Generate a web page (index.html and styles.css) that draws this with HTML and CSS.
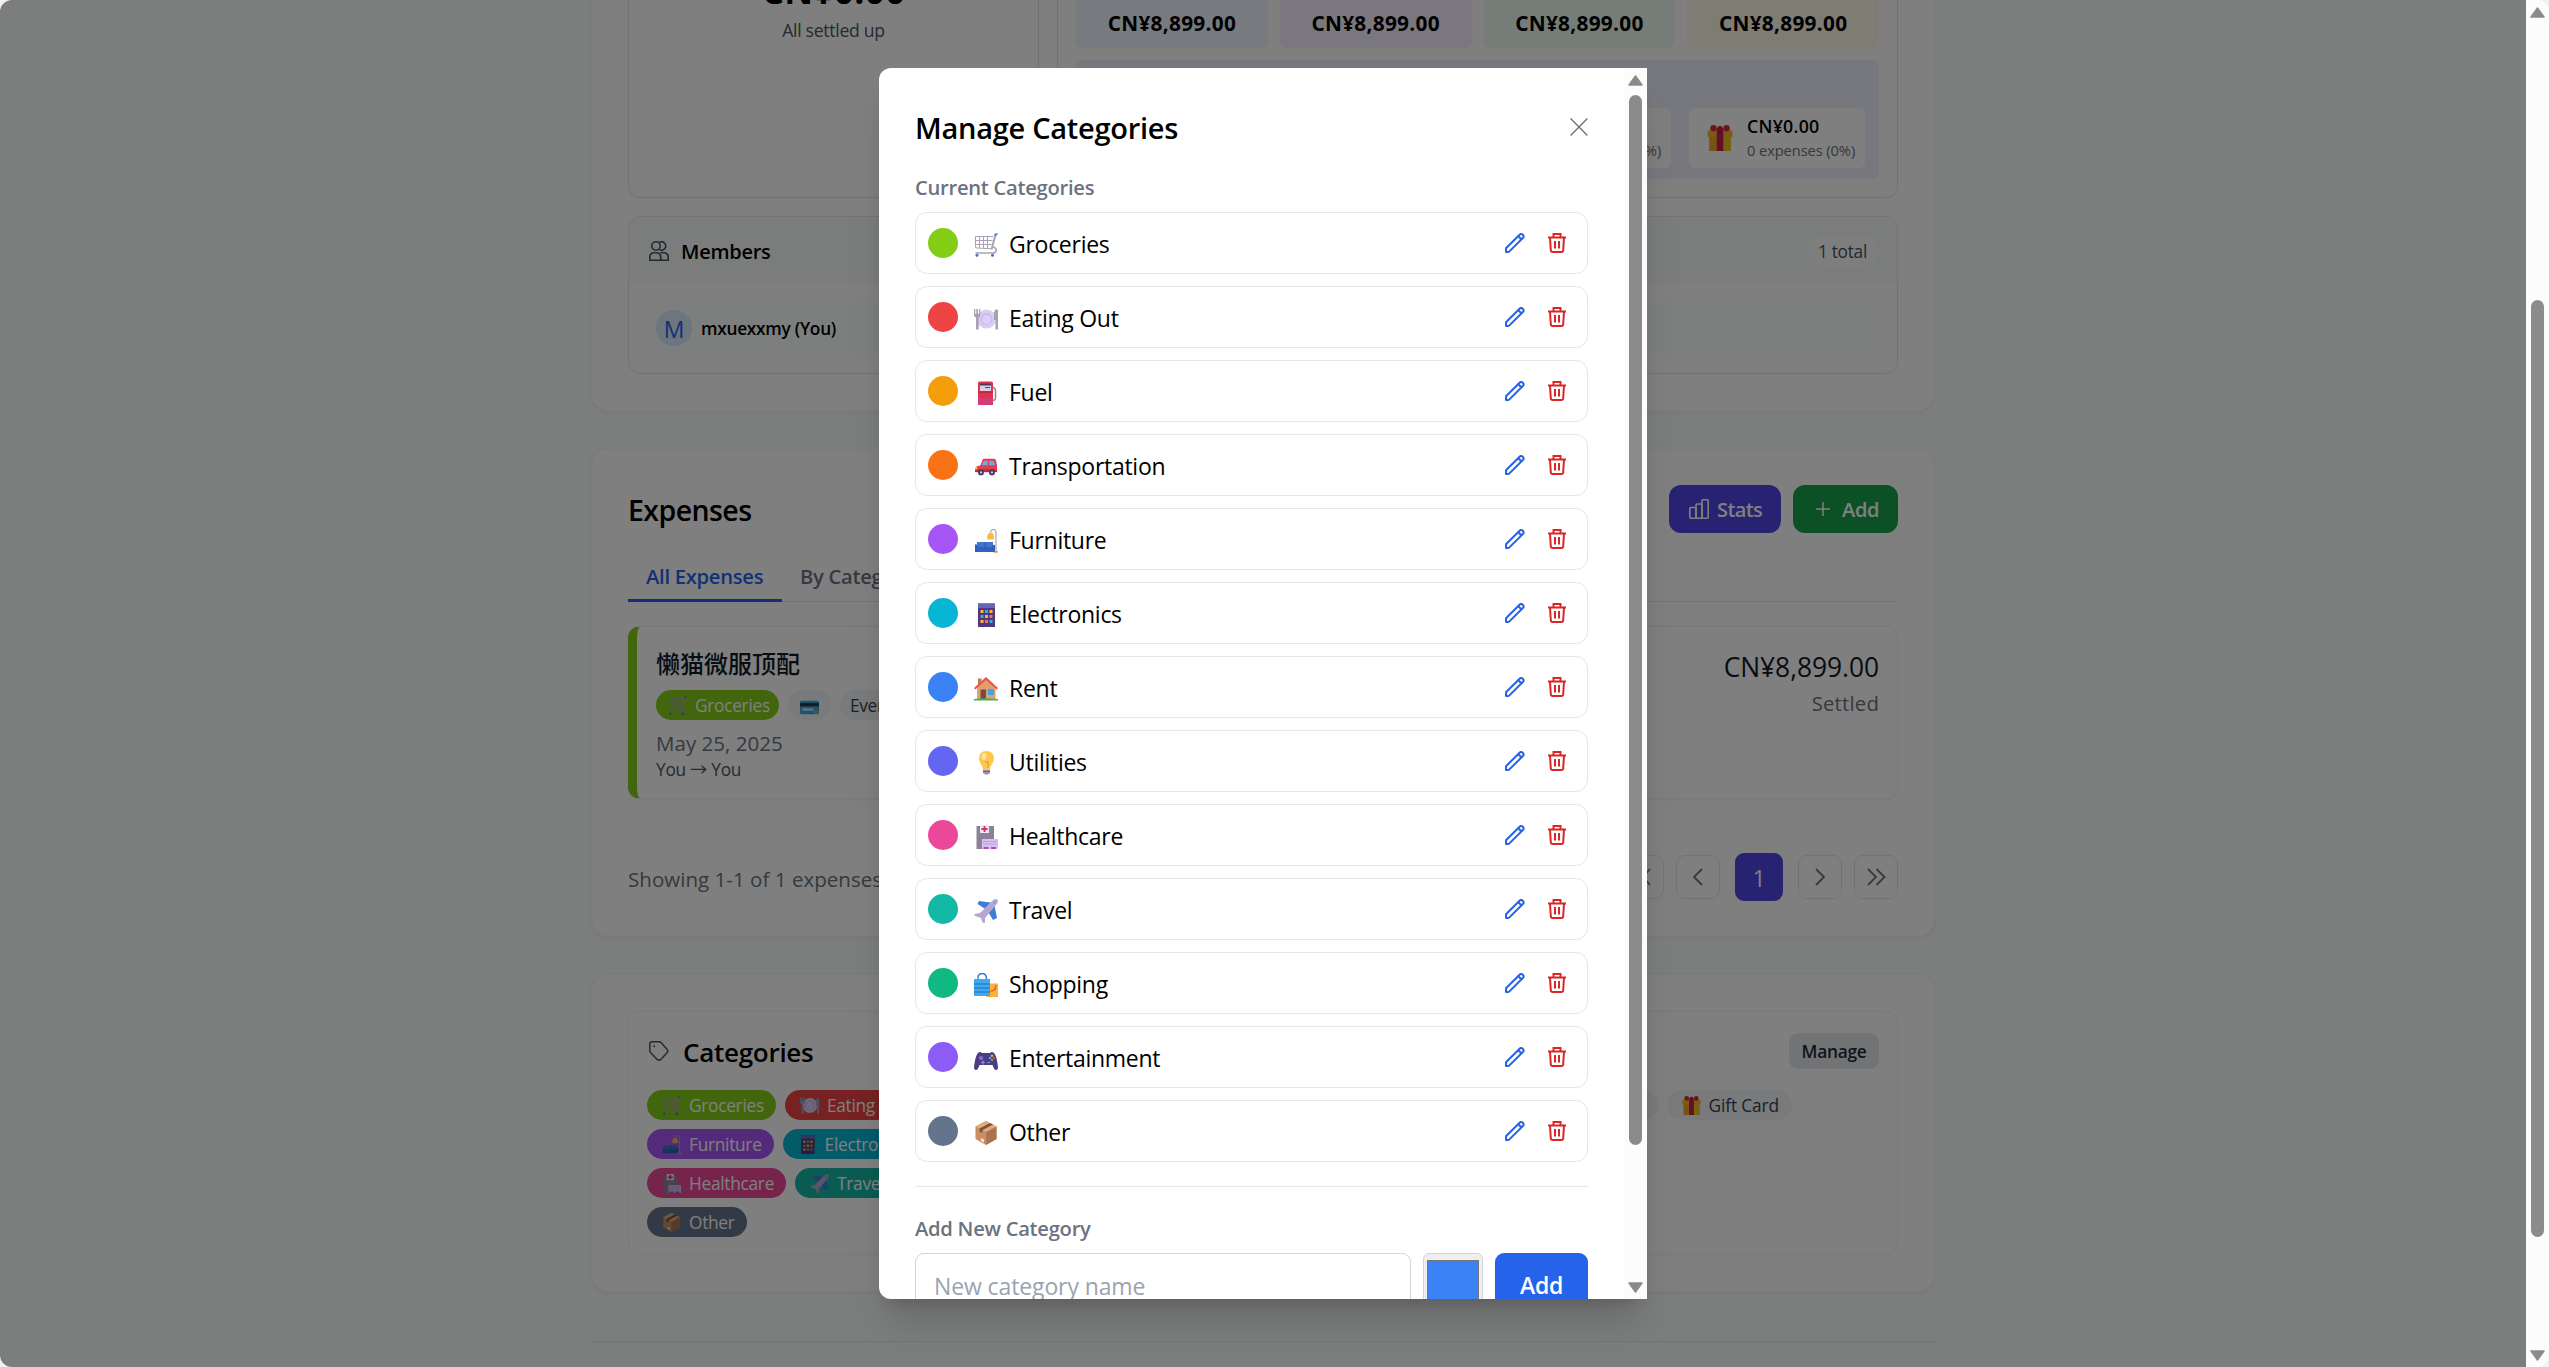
FILE: index.html
```html
<!DOCTYPE html>
<html lang="en">
<head>
<meta charset="utf-8">
<title>Manage Categories</title>
<link rel="stylesheet" href="styles.css">
</head>
<body>
<svg class="defs" aria-hidden="true">
  <symbol id="cart" viewBox="0 0 24 24"><g fill="none" stroke="#a9a3b3"><path d="M1.5 3.5h18M1.5 3.5v10q0 1.5 1.5 1.5l14 .8M5.5 4v11M9.5 4v11M13.500 4v11M1.500 7.500h17M1.500 11.500h16" stroke-width="1.1"/><path d="M21.500 2 17.500 16.500" stroke-width="2"/><path d="M19 14q4 1 3 4-.5 2-3 2H1.500" stroke-width="1.600"/></g><path d="M20.500.8l3-.8v2l-3 .9z" fill="#3f83dd"/><circle cx="3" cy="22.300" r="1.500" fill="#3f74d0"/><circle cx="18.500" cy="22.300" r="1.500" fill="#3f74d0"/></symbol>
  <symbol id="plate" viewBox="0 0 24 24"><circle cx="12.500" cy="12" r="9.500" fill="#d9cdf3"/><circle cx="12.500" cy="12" r="6" fill="#cbbbe9"/><circle cx="12.500" cy="12.500" r="4.500" fill="#dccff6"/><path d="M0 2h1.300v5h1V2h1.700v5h1V2h1.300v6q0 2-1.600 2.500V22.500H2V10.500Q0 10 0 8zM21 3q3-2 3 1v18.500h-2.500V13H20V6z" fill="#aaa0b6"/></symbol>
  <symbol id="fuel" viewBox="0 0 24 24"><path d="M18 6q4 1 3.500 5v6q0 3-3 2" fill="none" stroke="#8c8494" stroke-width="1.500"/><path d="M4 2q0-1.500 1.500-1.500h12Q19 .5 19 2v22H4z" fill="#e2344d"/><path d="M4 17h15v7H4z" fill="#d23b78"/><path d="M6 3h11v7H6z" fill="#d9cde2"/><path d="M6 2.500h11v2H6z" fill="#4a355e"/><path d="M11 6h5v1h-5z" fill="#57476b"/><path d="M4 10.500h15v1.200H4z" fill="#b92243"/></symbol>
  <symbol id="car" viewBox="0 0 24 24"><path d="M1 10.500l5-1.500 2-5.500q.5-1.500 2-1.500h11q1.500 0 2 2l1 5v7H1z" fill="#e63a4d"/><path d="M7.500 9L9.500 4H14v5zM15.500 4H20.500l1.300 5h-6.300z" fill="#55b4ee"/><path d="M0 13.500h24v3H0z" fill="#bd2749"/><path d="M0 11h2.500v2.500H0z" fill="#ffc83d"/><circle cx="6.500" cy="16.800" r="3.200" fill="#45325c"/><circle cx="18.500" cy="16.800" r="3.200" fill="#45325c"/><circle cx="6.500" cy="16.800" r="1.300" fill="#c9bdd6"/><circle cx="18.500" cy="16.800" r="1.300" fill="#c9bdd6"/></symbol>
  <symbol id="sofa" viewBox="0 0 24 24"><path d="M16.500 3q.5-2.500 3-2.500T22 3v19.500" fill="none" stroke="#aaa3ae" stroke-width="1.200"/><path d="M15.500 3.500h2.500q3 3 1.500 7h-6q-1.500-4 2-7z" fill="#f7bb42"/><path d="M20 22h4v1.800h-5z" fill="#eda43b"/><path d="M3 13h16v8H3z" fill="#3d75d1"/><path d="M1 15.500q2.500-1 3 2.500h14q.5-3 3-2v7H1z" fill="#2f62bd"/><path d="M11 13.500v5" stroke="#2a56a5"/></symbol>
  <symbol id="device" viewBox="0 0 24 24"><path d="M4 .5h17V24H4z" fill="#50377f"/><path d="M4 .5h17V5H4z" fill="#6566b8"/><g fill="#ffb13b"><path d="M6.500 7h3v3h-3zM15.500 7h3v3h-3zM11 12h3v3h-3zM6.500 17h3v3h-3z"/></g><g fill="#39a9e6"><path d="M11 7h3v3h-3zM6.500 12h3v3h-3zM15.500 17h3v3h-3z"/></g><g fill="#f8733f"><path d="M15.500 12h3v3h-3zM11 17h3v3h-3z"/></g></symbol>
  <symbol id="house" viewBox="0 0 24 24"><path d="M4 1.500h3.500V8H4z" fill="#b77f62"/><path d="M3 10l9-8 9.500 8v12.500H3z" fill="#dfa26f"/><path d="M12 0l12 11-1.300 1.500L12 3 1.300 12.500 0 11z" fill="#e9553f"/><path d="M6.500 12.500h5.500v10H6.500z" fill="#7b4a42"/><path d="M14 12h6v6h-6z" fill="#40a4ec"/><path d="M0 22q12-1.500 24 0v1.500H0z" fill="#4cae51"/></symbol>
  <symbol id="bulb" viewBox="0 0 24 24"><path d="M12.500 0Q20 0 20 7.500q0 3-2.300 6-1.700 2.500-1.700 4.500H9q0-2-1.800-4.500Q5 10.500 5 7.500 5 0 12.500 0z" fill="#fcc74c"/><ellipse cx="10" cy="5.500" rx="2.500" ry="3.500" fill="#ffe699"/><path d="M11 10l1.500 2 1.500-2v7" fill="none" stroke="#e8963b"/><path d="M9 18.500h7v3.500q-3.500 3.500-7 0z" fill="#a48db5"/><path d="M9 20.500h7" stroke="#76608b"/></symbol>
  <symbol id="hospital" viewBox="0 0 24 24"><path d="M2.500 1H20v23H2.500z" fill="#8c8297"/><path d="M6 0h9v8H6z" fill="#f0e7f6"/><path d="M10.500 1v6M7.500 4h6" stroke="#dc2c5b" stroke-width="1.800"/><path d="M8 14h16v10H8z" fill="#d8c1f0"/><path d="M9 16.500h14M9 19h14" stroke="#bea0e1"/><path d="M9.500 22h5v2h-5zM17 22h5v2h-5z" fill="#b34ab7"/></symbol>
  <symbol id="plane" viewBox="0 0 24 24"><path d="M5 2l15 2 3 15-4 2-6-10L3.500 5z" fill="#3d7fd8"/><path d="M18 2q3-3 5.500-1.500Q25 3 21.500 6.500L11 19v5l-2.500-.5L7 19l-6-2-.8-2L6 14z" fill="#b7a6cf"/><path d="M19.500 2.500l2 2" stroke="#42b5e6" stroke-width="1.500"/></symbol>
  <symbol id="bags" viewBox="0 0 24 24"><path d="M13 10.500h11V24H12z" fill="#ffb03a"/><path d="M21.500 12q1 6-5 6" fill="none" stroke="#db602e" stroke-width="1.300"/><path d="M4 7V5q0-4.500 4-4.500T12.500 5v2" fill="none" stroke="#287dc7" stroke-width="1.400"/><path d="M0 6h16v17H0z" fill="#41a8ee"/><path d="M0 11h16M0 15h16M0 19h16" stroke="#2683d4" stroke-width="1.300"/></symbol>
  <symbol id="gamepad" viewBox="0 0 24 24"><path d="M4 6q2-2 4 0h8q2-2 4 0 2.500 2 4 14 0 3-2 3t-3.500-5H5.500Q4 23 2 23t-2-3Q1.500 8 4 6z" fill="#4f3a83"/><circle cx="7" cy="11" r="2" fill="#7e77c2"/><path d="M9 13.500v4M7 15.500h4M13 15.500h3" stroke="#6fa4e8" stroke-width="1.200"/><circle cx="18" cy="8.800" r="1.200" fill="#f7b433"/><circle cx="20" cy="11" r="1.200" fill="#ef4056"/><circle cx="16" cy="11" r="1.200" fill="#42b5e6"/><circle cx="18" cy="13" r="1.200" fill="#43b581"/></symbol>
  <symbol id="box" viewBox="0 0 24 24"><path d="M12 0l10.500 5.500V18L12 24 1.500 18V5.500z" fill="#c98e61"/><path d="M12 11v13l10.500-6V5.500z" fill="#ad7350"/><path d="M12 0l10.500 5.500L12 11 1.500 5.500z" fill="#dfac7b"/><path d="M5.500 7.600L16 2l3 1.600L8.300 9.200V12l-2.800-1.500z" fill="#7d5142"/><path d="M7 17l3 1.500v3L7 20z" fill="#f3e3da"/></symbol>
  <symbol id="gift" viewBox="0 0 24 24"><path d="M2 6h20v18H2z" fill="#efa526"/><path d="M14 6h8v18h-8z" fill="#e8c51c"/><path d="M.5 5h23v6H.5z" fill="#f7b92c"/><path d="M9 3h6v21H9z" fill="#c81d4f"/><circle cx="6" cy="3" r="3" fill="#dd2939"/><circle cx="18" cy="3" r="3" fill="#dd2939"/><circle cx="12" cy="3.500" r="2.500" fill="#c91f35"/></symbol>
  <symbol id="card" viewBox="0 0 24 24"><rect x="0" y="6" width="24" height="17" rx="2" fill="#3aa7dc"/><path d="M0 9h24v4H0z" fill="#24344b"/><path d="M3 15.500h14v3H3z" fill="#d5e5ef"/><circle cx="20" cy="20" r="1.800" fill="#efb52c"/></symbol>
  <symbol id="pencil" viewBox="0 0 20 20"><g fill="none" stroke="currentColor" stroke-width="2" stroke-linejoin="round"><path d="M1 19v-3.800L14.800 1.500q1.500-1.200 3 .3t.3 3L4.400 18.400q-.6.600-1.500.6z"/><path d="M13.300 3.300l3.200 3.200"/></g></symbol>
  <symbol id="trash" viewBox="0 0 18 20"><g fill="none" stroke="currentColor" stroke-width="2"><path d="M0 4.500h18M5.500 4V1h7v3M2 4.500l.8 12.700q.1 1.800 1.800 1.800h8.800q1.700 0 1.800-1.800l.8-12.700M7 8v7.600M11 8v7.600"/></g></symbol>
</svg>
<div class="window">
  <div class="viewport">
    <main class="container">
      <section class="card group">
        <div class="summary">
          <div class="panel balance"><div class="big">CN¥0.00</div><div class="t18 gray">All settled up</div></div>
          <div class="panel totals">
            <div class="tiles"><div class="tile blue">CN¥8,899.00</div><div class="tile violet">CN¥8,899.00</div><div class="tile green">CN¥8,899.00</div><div class="tile amber">CN¥8,899.00</div></div>
            <div class="methods">
              <div class="method"><svg><use href="#card"/></svg><div><b>CN¥0.00</b><small>0 expenses (0%)</small></div></div>
              <div class="method"><svg><use href="#gift"/></svg><div><b>CN¥0.00</b><small>0 expenses (0%)</small></div></div>
            </div>
          </div>
        </div>
        <div class="panel members">
          <div class="members-head">
            <svg class="i20" viewBox="0 0 20 20"><g fill="none" stroke="currentColor" stroke-width="1.600"><circle cx="7" cy="5" r="4.200"/><path d="M10 1.600a4.200 4.200 0 1 1 0 6.800M.8 19.200v-3q0-4.500 4.500-4.500h2q4.500 0 4.500 4.500v3zM11.500 11.700h3q4.700 0 4.700 4.500v3h-7.500"/></g></svg>
            <h3>Members</h3><span class="total"><b>1</b> total</span>
          </div>
          <div class="member"><span class="avatar">M</span><span class="member-name">mxuexxmy (You)</span></div>
        </div>
      </section>

      <section class="card expenses">
        <div class="head">
          <h2>Expenses</h2>
          <div class="btn stats"><svg class="i20" viewBox="0 0 20 20"><g fill="none" stroke="currentColor" stroke-width="1.600"><rect x=".8" y="8.500" width="6.200" height="10.700" rx="1"/><rect x="7" y="5" width="6" height="14.200" rx="1"/><rect x="13" y=".8" width="6.200" height="18.400" rx="1"/></g></svg>Stats</div>
          <div class="btn add"><svg class="i14" viewBox="0 0 14 14"><path d="M7 0v14M0 7h14" stroke="currentColor" stroke-width="1.500"/></svg>Add</div>
        </div>
        <div class="tabs"><span class="tab active">All Expenses</span><span class="tab">By Category</span></div>
        <div class="expense">
          <div class="expense-main">
            <div class="title">懒猫微服顶配</div>
            <div class="tags"><span class="pill tight c-lime"><svg><use href="#cart"/></svg>Groceries</span><span class="pill tight plain solo"><svg><use href="#card"/></svg></span><span class="pill tight plain">Everyone</span></div>
            <div class="date">May 25, 2025</div>
            <div class="who">You → You</div>
          </div>
          <div class="expense-side"><div class="amount">CN¥8,899.00</div><div class="settled">Settled</div></div>
        </div>
        <div class="pager">
          <span class="showing">Showing 1-1 of 1 expenses</span>
          <span class="page"><svg viewBox="0 0 20 20"><path d="M9 2L2 10l7 8M18 2l-7 8 7 8"/></svg></span>
          <span class="page"><svg viewBox="0 0 20 20"><path d="M14 2L6 10l8 8"/></svg></span>
          <span class="page current">1</span>
          <span class="page"><svg viewBox="0 0 20 20"><path d="M6 2l8 8-8 8"/></svg></span>
          <span class="page"><svg viewBox="0 0 20 20"><path d="M2 2l8 8-8 8M10.500 2l8 8-8 8"/></svg></span>
        </div>
      </section>

      <section class="card cats">
        <div class="panel cats-panel">
          <div class="cats-head">
            <svg class="i20" viewBox="0 0 20 20"><g fill="none" stroke="currentColor" stroke-width="1.500"><path d="M.8 10V3Q.8.800 3 .8h7q1.200 0 2 .8l6 6.600q1.600 1.800 0 3.600L12 18.200q-2 2-4 0l-6-6.200q-1.200-1-1.200-2z"/></g><circle cx="5.200" cy="5.300" r="1" fill="currentColor"/></svg>
            <h3>Categories</h3><span class="manage">Manage</span>
          </div>
          <div class="cats-body">
            <div class="cats-rows">
              <div class="tags"><span class="pill c-lime"><svg><use href="#cart"/></svg>Groceries</span><span class="pill c-red"><svg><use href="#plate"/></svg>Eating Out</span></div>
              <div class="tags"><span class="pill c-purple"><svg><use href="#sofa"/></svg>Furniture</span><span class="pill c-cyan"><svg><use href="#device"/></svg>Electronics</span></div>
              <div class="tags"><span class="pill c-pink"><svg><use href="#hospital"/></svg>Healthcare</span><span class="pill c-teal"><svg><use href="#plane"/></svg>Travel</span></div>
              <div class="tags"><span class="pill c-slate"><svg><use href="#box"/></svg>Other</span></div>
            </div>
            <div class="tags methods-tags"><span class="pill plain"><svg><use href="#card"/></svg>Bank Card</span><span class="pill plain"><svg><use href="#gift"/></svg>Gift Card</span></div>
          </div>
        </div>
      </section>
      <footer class="footer"></footer>
    </main>

    <div class="overlay">
      <div class="modal">
        <div class="modal-body">
          <div class="modal-head"><h2>Manage Categories</h2><svg class="close" viewBox="0 0 18 18"><path d="M.6.6l16.800 16.800M17.400.600L.6 17.400" stroke="currentColor" stroke-width="1.400"/></svg></div>
          <h4>Current Categories</h4>
          <div class="list">
            <div class="row"><i class="dot c-lime"></i><svg class="emoji"><use href="#cart"/></svg><span>Groceries</span><svg class="edit"><use href="#pencil"/></svg><svg class="del"><use href="#trash"/></svg></div>
            <div class="row"><i class="dot c-red"></i><svg class="emoji"><use href="#plate"/></svg><span>Eating Out</span><svg class="edit"><use href="#pencil"/></svg><svg class="del"><use href="#trash"/></svg></div>
            <div class="row"><i class="dot c-amber"></i><svg class="emoji"><use href="#fuel"/></svg><span>Fuel</span><svg class="edit"><use href="#pencil"/></svg><svg class="del"><use href="#trash"/></svg></div>
            <div class="row"><i class="dot c-orange"></i><svg class="emoji car"><use href="#car"/></svg><span>Transportation</span><svg class="edit"><use href="#pencil"/></svg><svg class="del"><use href="#trash"/></svg></div>
            <div class="row"><i class="dot c-purple"></i><svg class="emoji"><use href="#sofa"/></svg><span>Furniture</span><svg class="edit"><use href="#pencil"/></svg><svg class="del"><use href="#trash"/></svg></div>
            <div class="row"><i class="dot c-cyan"></i><svg class="emoji"><use href="#device"/></svg><span>Electronics</span><svg class="edit"><use href="#pencil"/></svg><svg class="del"><use href="#trash"/></svg></div>
            <div class="row"><i class="dot c-blue"></i><svg class="emoji"><use href="#house"/></svg><span>Rent</span><svg class="edit"><use href="#pencil"/></svg><svg class="del"><use href="#trash"/></svg></div>
            <div class="row"><i class="dot c-indigo"></i><svg class="emoji"><use href="#bulb"/></svg><span>Utilities</span><svg class="edit"><use href="#pencil"/></svg><svg class="del"><use href="#trash"/></svg></div>
            <div class="row"><i class="dot c-pink"></i><svg class="emoji"><use href="#hospital"/></svg><span>Healthcare</span><svg class="edit"><use href="#pencil"/></svg><svg class="del"><use href="#trash"/></svg></div>
            <div class="row"><i class="dot c-teal"></i><svg class="emoji"><use href="#plane"/></svg><span>Travel</span><svg class="edit"><use href="#pencil"/></svg><svg class="del"><use href="#trash"/></svg></div>
            <div class="row"><i class="dot c-emerald"></i><svg class="emoji"><use href="#bags"/></svg><span>Shopping</span><svg class="edit"><use href="#pencil"/></svg><svg class="del"><use href="#trash"/></svg></div>
            <div class="row"><i class="dot c-violet"></i><svg class="emoji"><use href="#gamepad"/></svg><span>Entertainment</span><svg class="edit"><use href="#pencil"/></svg><svg class="del"><use href="#trash"/></svg></div>
            <div class="row"><i class="dot c-slate"></i><svg class="emoji"><use href="#box"/></svg><span>Other</span><svg class="edit"><use href="#pencil"/></svg><svg class="del"><use href="#trash"/></svg></div>
          </div>
          <div class="new">
            <h4>Add New Category</h4>
            <div class="form"><div class="input">New category name</div><div class="color"><i></i></div><div class="submit">Add</div></div>
          </div>
        </div>
        <div class="scroll modal-scroll"><svg viewBox="0 0 15 11"><path d="M7.500 1L14 10H1z"/></svg><i></i><svg class="down" viewBox="0 0 15 11"><path d="M7.500 10L14 1H1z"/></svg></div>
      </div>
    </div>
  </div>
  <div class="scroll page-scroll"><svg viewBox="0 0 15 11"><path d="M7.500 1L14 10H1z"/></svg><i></i><svg class="down" viewBox="0 0 15 11"><path d="M7.500 10L14 1H1z"/></svg></div>
</div>
</body>
</html>
```
FILE: styles.css
```css
* { box-sizing: border-box; }
html, body { margin: 0; height: 100%; overflow: hidden; background: #f1f1f1; }
body { font-family: "Open Sans", "Noto Sans", "Noto Sans CJK SC", sans-serif; font-size: 23px; line-height: 36px; letter-spacing: -0.012em; color: #000; }
h2, h3, h4 { margin: 0; font-weight: 600; }
svg { flex: none; display: block; }
.defs { position: absolute; width: 0; height: 0; }

.window { display: flex; width: 2549px; height: 1367px; border-radius: 12px; overflow: hidden; background: #fcfcfc; }
.viewport { position: relative; width: 2526px; height: 1367px; overflow: hidden; background: #f8fcfa; }
.container { width: 1344px; margin: 0 auto; }
.card { background: #fff; border: 1px solid #f5f7f7; border-radius: 18px; padding: 36px; box-shadow: 0 1px 4px rgba(0,0,0,.06); }
.panel { border: 1px solid #e5e7eb; border-radius: 12px; }
.i20 { width: 20px; height: 20px; }
.i14 { width: 14px; height: 14px; }

/* group summary */
.group { height: 411px; padding-top: 0; border-top: 0; border-radius: 0 0 18px 18px; margin-bottom: 37px; }
.summary { display: grid; grid-template-columns: 411px 841px; gap: 18px; height: 198px; margin-bottom: 18px; }
.summary .panel { border-top: 0; border-radius: 0 0 12px 12px; }
.balance { text-align: center; overflow: hidden; }
.big { font-size: 35.500px; font-weight: 700; line-height: 54px; letter-spacing: .005em; margin-top: -37px; }
.t18 { font-size: 17.600px; line-height: 27px; }
.gray { color: #4b5563; }
.totals { padding: 0 18px; }
.tiles { display: grid; grid-template-columns: repeat(4, 1fr); gap: 12px; margin-bottom: 12px; }
.tile { height: 48px; padding-top: 7px; border-radius: 0 0 6px 6px; text-align: center; font-size: 20.800px; font-weight: 700; line-height: 32px; letter-spacing: .014em; }
.blue { background: #eff6ff; }
.violet { background: #f7efff; }
.green { background: #ecfbf1; }
.amber { background: #fff8e6; }
.methods { display: flex; justify-content: flex-end; gap: 18px; height: 119px; padding: 48px 14px 11px; border-radius: 6px; background: #eef0fc; }
.method { display: flex; align-items: center; width: 176px; padding-left: 18px; background: #fff; border-radius: 6px; }
.method svg { width: 26px; height: 28px; margin-right: 14px; }
.method b { display: block; padding-top: 1px; font-size: 17.800px; font-weight: 600; line-height: 23px; letter-spacing: .014em; }
.method small { display: block; font-size: 14.700px; line-height: 24px; color: #6b7280; white-space: nowrap; letter-spacing: -.007em; }
.members { height: 158px; overflow: hidden; }
.members-head { display: flex; align-items: center; height: 66px; padding: 1px 18px 0 20px; background: #f5faf8; color: #4b5563; }
.members-head h3 { margin-left: 12px; padding-top: 2px; font-size: 20px; color: #000; }
.total { margin-left: auto; padding: 1px 12px 0; height: 30px; border-radius: 15px; background: #fafcfb; font-size: 17.300px; line-height: 29px; }
.total b { font-weight: 500; }
.member { display: flex; align-items: center; height: 54px; margin: 18px; padding-left: 9px; border-radius: 9px; background: #fbfdfc; }
.avatar { width: 36px; height: 36px; margin-right: 9px; border-radius: 50%; background: #dbeafe; color: #2563eb; text-align: center; line-height: 38px; }
.member-name { font-size: 17.300px; font-weight: 600; padding-top: 2px; }

/* expenses */
.expenses { height: 489px; margin-bottom: 37px; padding-top: 36px; }
.head { display: flex; align-items: center; height: 48px; }
.head h2 { font-size: 28.500px; margin-right: auto; padding-top: 1px; letter-spacing: -.02em; }
.btn { display: flex; align-items: center; height: 48px; border-radius: 12px; font-size: 20px; font-weight: 600; color: #fff; line-height: 49px; }
.stats { width: 112px; padding-left: 20px; margin-right: 12px; background: #4f46e5; letter-spacing: -.03em; }
.stats svg { margin-right: 8px; }
.add { width: 105px; padding-left: 23px; background: #16a34a; }
.add svg { margin-right: 12px; }
.tabs { display: flex; height: 69px; padding-top: 21px; border-bottom: 1px solid #e5e7eb; }
.tab { height: 48px; padding: 1px 18px 0; font-size: 20.200px; font-weight: 600; line-height: 42px; color: #6b7280; }
.tab.active { width: 154px; border-bottom: 3px solid #2563eb; color: #2563eb; white-space: nowrap; }
.expense { display: flex; justify-content: space-between; height: 173px; margin-top: 24px; padding: 0 18px 0 19px; border: 1px solid #f0f1f3; border-left: 9px solid #84cc16; border-radius: 12px; box-shadow: 0 1px 3px rgba(0,0,0,.06); }
.title { margin-top: 19px; font-size: 24px; font-weight: 500; line-height: 36px; color: #111827; letter-spacing: 0; }
.tags { display: flex; gap: 9px; }
.expense .tags { margin-top: 8px; }
.date { margin-top: 8px; font-size: 20.500px; line-height: 30px; color: #6b7280; letter-spacing: .002em; }
.who { font-size: 17.300px; line-height: 24px; color: #4b5563; }
.expense-side { text-align: right; }
.amount { margin-top: 20px; font-size: 26.400px; font-weight: 500; line-height: 40px; color: #111827; letter-spacing: -.002em; }
.settled { font-size: 20.300px; font-weight: 500; line-height: 32px; color: #6b7280; letter-spacing: .01em; }
.pager { display: flex; align-items: center; height: 48px; margin-top: 54px; }
.showing { margin-right: auto; font-size: 20.500px; color: #6b7280; padding-top: 3px; letter-spacing: .002em; }
.page { display: flex; align-items: center; justify-content: center; width: 44px; height: 44px; margin-left: 12px; border: 1px solid #e5e7eb; border-radius: 9px; }
.page svg { width: 20px; height: 20px; fill: none; stroke: #6b7280; stroke-width: 1.800; }
.page.current { width: 48px; height: 48px; margin: 0 3px 0 15px; padding-top: 2px; border: 0; background: #4f46e5; color: #fff; }

/* category pills */
.cats { height: 318px; }
.cats-panel { height: 244px; padding: 21px 18px 0; border-color: #f0f1f3; }
.cats-head { display: flex; align-items: center; height: 36px; padding-left: 2px; margin-bottom: 21px; color: #4b5563; }
.cats-head h3 { margin-left: 14px; margin-right: auto; font-size: 26px; color: #000; padding-top: 2px; }
.manage { width: 90px; height: 36px; border-radius: 9px; background: #e5e7eb; color: #1f2937; text-align: center; font-size: 17.300px; font-weight: 600; line-height: 37px; }
.cats-body { display: flex; justify-content: space-between; }
.cats-rows { display: flex; flex-direction: column; gap: 9px; }
.methods-tags { margin-right: 87px; }
.pill { display: flex; align-items: center; height: 30px; padding: 1px 12px 0 15px; border-radius: 15px; font-size: 17.300px; line-height: 29px; color: #fff; white-space: nowrap; }
.pill svg { width: 19px; height: 19px; margin-right: 8px; }
.methods-tags .pill { padding-right: 13px; letter-spacing: -.007em; }
.pill.tight { padding: 1px 9px 0 12px; }
.pill.tight.plain { padding-left: 10px; }
.pill.tight.solo { width: 43px; padding-left: 12px; }
.pill.plain { background: #f3f4f6; color: #374151; }
.footer { margin-top: 49px; border-top: 1px solid #e5e7eb; }

.c-lime { background: #84cc16; }
.c-red { background: #ef4444; }
.c-amber { background: #f59e0b; }
.c-orange { background: #f97316; }
.c-purple { background: #a855f7; }
.c-cyan { background: #06b6d4; }
.c-blue { background: #3b82f6; }
.c-indigo { background: #6366f1; }
.c-pink { background: #ec4899; }
.c-teal { background: #14b8a6; }
.c-emerald { background: #10b981; }
.c-violet { background: #8b5cf6; }
.c-slate { background: #64748b; }

/* dialog */
.overlay { position: absolute; inset: 0; display: flex; align-items: center; justify-content: center; background: rgba(0,0,0,.5); }
.modal { display: flex; width: 768px; height: 1231px; overflow: hidden; border-radius: 12px 0 0 12px; background: #fff; box-shadow: 0 30px 38px -8px rgba(0,0,0,.15), 0 12px 15px -9px rgba(0,0,0,.15); }
.modal-body { width: 745px; padding: 36px; }
.modal-head { display: flex; align-items: center; justify-content: space-between; height: 46px; }
.modal-head h2 { font-size: 29px; line-height: 45px; }
.close { width: 18px; height: 18px; color: #6b7280; }
h4 { font-size: 20.200px; line-height: 32px; color: #6b7280; }
.modal-head + h4 { margin: 21px 0 9px; }
.list { display: flex; flex-direction: column; gap: 12px; }
.row { display: flex; align-items: center; height: 62px; padding: 0 21px 0 12px; border: 1px solid #e5e7eb; border-radius: 12px; }
.dot { width: 30px; height: 30px; margin-right: 16px; border-radius: 50%; }
.emoji { width: 24px; height: 24px; margin: 4px 11px 0 0; }
.emoji.car { padding-top: 2px; }
.row span { flex: 1; padding-top: 2px; }
.edit { width: 20px; height: 20px; margin-right: 23px; color: #2563eb; }
.del { width: 18px; height: 20px; color: #dc2626; }
.new { margin-top: 24px; padding-top: 25px; border-top: 1px solid #e5e7eb; }
.form { display: flex; height: 63px; margin-top: 9px; }
.input { width: 496px; margin-right: 12px; padding: 11px 18px; border: 1px solid #d1d5db; border-radius: 9px; line-height: 42px; color: #9ca3af; letter-spacing: -.005em; }
.color { width: 60px; margin-right: 12px; padding: 6px 3px; border: 1px solid #d1d5db; border-radius: 6px; background: #efefef; }
.color i { display: block; height: 100%; border: 1px solid #767676; background: #3b82f6; }
.submit { flex: 1; border-radius: 9px; background: #2563eb; color: #fff; text-align: center; font-weight: 600; line-height: 65px; }

.scroll { display: flex; flex-direction: column; align-items: center; width: 23px; background: #fcfcfc; }
.scroll svg { width: 15px; height: 11px; fill: #8b8b8b; stroke: #8b8b8b; stroke-width: 1.500; stroke-linejoin: round; }
.scroll i { width: 13px; border-radius: 7px; background: #8b8b8b; }
.scroll .down { margin-top: auto; }
.modal-scroll { padding: 7px 0 6px; }
.modal-scroll i { height: 1050px; margin-top: 9px; }
.page-scroll { padding: 7px 0 6px; }
.page-scroll i { height: 937px; margin-top: 282px; }
```
